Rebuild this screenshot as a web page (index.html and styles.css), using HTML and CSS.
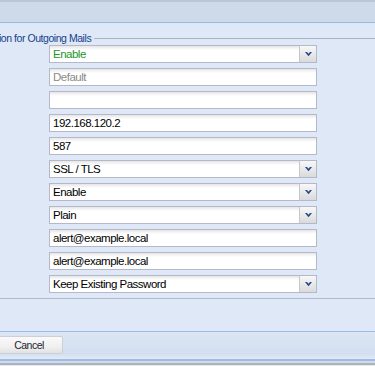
FILE: index.html
```html
<!DOCTYPE html>
<html lang="en">
<head>
  <meta charset="UTF-8" />
  <title>Outgoing Mail Settings</title>
  <link rel="stylesheet" href="styles.css">
</head>
<body>
  <div class="window">
    <div class="window-header"></div>

    <div class="window-body">
      <fieldset class="mail-set">
        <legend>Configuration for Outgoing Mails</legend>

        <div class="field combo">
          <span class="value status-on">Enable</span>
          <span class="trigger"><svg width="7" height="5" viewBox="0 0 7 5"><polygon points="0,0 2,0 3.5,1.8 5,0 7,0 3.5,4.2" fill="#21468a"/></svg></span>
        </div>
        <div class="field"><span class="value empty">Default</span></div>
        <div class="field"><span class="value"></span></div>
        <div class="field"><span class="value">192.168.120.2</span></div>
        <div class="field"><span class="value">587</span></div>
        <div class="field combo">
          <span class="value">SSL / TLS</span>
          <span class="trigger"><svg width="7" height="5" viewBox="0 0 7 5"><polygon points="0,0 2,0 3.5,1.8 5,0 7,0 3.5,4.2" fill="#21468a"/></svg></span>
        </div>
        <div class="field combo">
          <span class="value">Enable</span>
          <span class="trigger"><svg width="7" height="5" viewBox="0 0 7 5"><polygon points="0,0 2,0 3.5,1.8 5,0 7,0 3.5,4.2" fill="#21468a"/></svg></span>
        </div>
        <div class="field combo">
          <span class="value">Plain</span>
          <span class="trigger"><svg width="7" height="5" viewBox="0 0 7 5"><polygon points="0,0 2,0 3.5,1.8 5,0 7,0 3.5,4.2" fill="#21468a"/></svg></span>
        </div>
        <div class="field"><span class="value">alert@example.local</span></div>
        <div class="field"><span class="value">alert@example.local</span></div>
        <div class="field combo">
          <span class="value">Keep Existing Password</span>
          <span class="trigger"><svg width="7" height="5" viewBox="0 0 7 5"><polygon points="0,0 2,0 3.5,1.8 5,0 7,0 3.5,4.2" fill="#21468a"/></svg></span>
        </div>
      </fieldset>
    </div>

    <div class="window-footer">
      <button class="btn">Cancel</button>
    </div>
    <div class="window-edge"></div>
  </div>
</body>
</html>
```

FILE: styles.css
```css
body {
  margin: 0;
  height: 366px;
  overflow: hidden;
  background: #dfe8f6;
  font-family: 'Liberation Sans', Arial, sans-serif;
  color: #000;
}
.window {
  margin-left: -70px;
  width: 520px;
}
.window-header {
  height: 20px;
  background: #cedae9;
  border-top: 2px solid #bcc5d1;
  border-bottom: 1px solid #99bbe8;
}
.window-body {
  height: 308px;
  box-sizing: border-box;
  padding: 9px 0 0 16px;
}
.mail-set {
  margin: 0;
  padding: 1px 0 0 0;
  border: 1px solid #b5b8c8;
  border-top-color: #aab3c4;
}
.mail-set legend {
  margin-left: 5px;
  padding: 0 3px;
  font-size: 10.5px;
  line-height: 12px;
  letter-spacing: -0.45px;
  color: #15428b;
}
.field {
  display: flex;
  width: 268px;
  height: 18px;
  box-sizing: border-box;
  margin: 0 0 5px 102px;
  border: 1px solid #b5b8c8;
  background: linear-gradient(#e6e6e6, #fff 4px);
}
.value {
  flex: 1;
  padding: 0 3px;
  font-size: 11.5px;
  line-height: 16px;
  letter-spacing: -0.5px;
  white-space: nowrap;
}
.status-on {
  color: #23962a;
}
.empty {
  color: #8a8a8a;
}
.trigger {
  width: 16px;
  display: flex;
  align-items: center;
  justify-content: center;
  background: linear-gradient(#f8f8f8, #dadada);
  border-left: 1px solid #c4c7d2;
}
.window-footer {
  height: 28px;
  box-sizing: border-box;
  padding: 3px 0 0 65px;
  border-top: 1px solid #99bbe8;
  background: linear-gradient(#dce6f4, #d2dff0 80%, #e2eaf6);
}
.btn {
  width: 68px;
  height: 18px;
  padding: 0;
  border: 1px solid #ccd0d6;
  border-radius: 2px;
  background: linear-gradient(#fafafa, #f0f0f0 60%, #e2e2e2);
  font-family: inherit;
  font-size: 10.5px;
  letter-spacing: -0.5px;
  color: #1c2430;
}
.window-edge {
  height: 2px;
  background: #cfdcee;
  border-top: 2px solid #9cbbe6;
  border-bottom: 2px solid #b2b2b2;
}
```
